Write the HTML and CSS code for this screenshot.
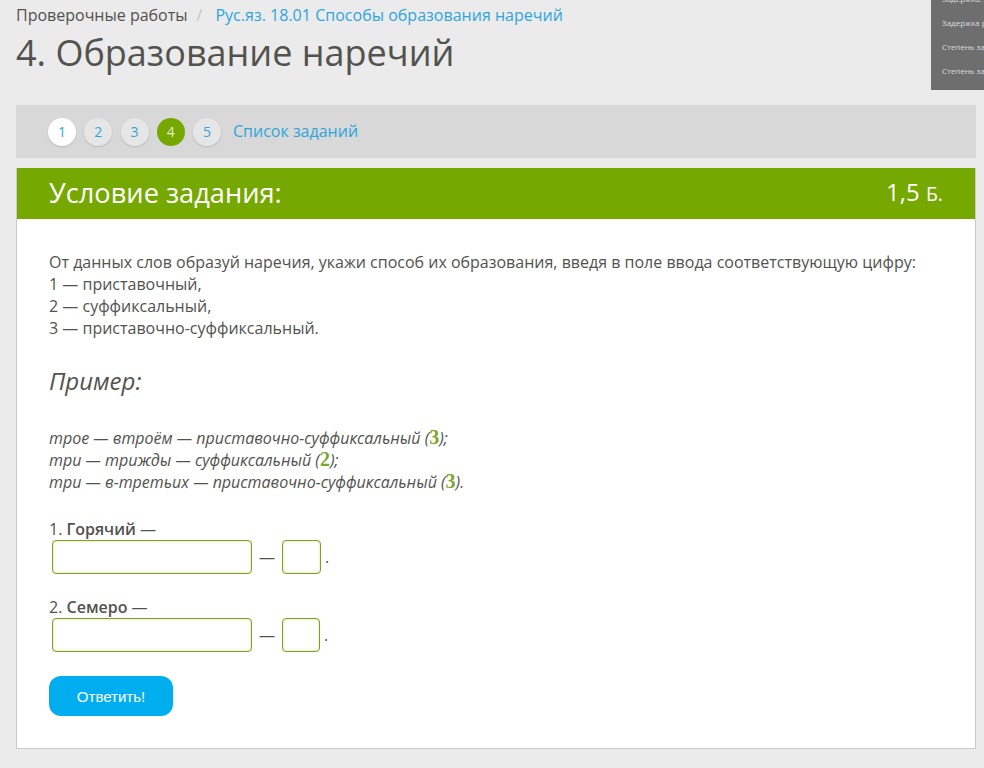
FILE: index.html
```html
<!DOCTYPE html>
<html lang="ru">
<head>
<meta charset="utf-8">
<title>4. Образование наречий</title>
<link rel="stylesheet" href="styles.css">
</head>
<body>
<div class="stats">
  <div class="stat stat-cut">Задержка: 35</div>
  <div class="stat">Задержка рен</div>
  <div class="stat">Степень загр</div>
  <div class="stat">Степень загр</div>
</div>
<nav class="crumbs"><span>Проверочные работы</span><span class="sep">/</span><a href="#">Рус.яз. 18.01 Способы образования наречий</a></nav>
<h1 class="title">4. Образование наречий</h1>
<div class="pager">
  <a class="dot dot-white" href="#">1</a>
  <a class="dot" href="#">2</a>
  <a class="dot" href="#">3</a>
  <a class="dot dot-active" href="#">4</a>
  <a class="dot" href="#">5</a>
  <a class="list-link" href="#">Список заданий</a>
</div>
<section class="card">
  <header class="card-head"><span class="card-title">Условие задания:</span><span class="score">1,5 <small>Б.</small></span></header>
  <div class="card-body">
    <p class="intro">От данных слов образуй наречия, укажи способ их образования, введя в поле ввода соответствующую цифру:<br>1 — приставочный,<br>2 — суффиксальный,<br>3 — приставочно-суффиксальный.</p>
    <h2 class="example">Пример:</h2>
    <p class="samples">трое — втроём — приставочно-суффиксальный (<b class="num">3</b>);<br>три — трижды — суффиксальный (<b class="num">2</b>);<br>три — в-третьих — приставочно-суффиксальный (<b class="num">3</b>).</p>
    <div class="task">
      <div>1. <b>Горячий</b> —</div>
      <div class="answer"><input class="field field-long" type="text"><span class="dash">—</span><input class="field field-short" type="text"><span class="stop">.</span></div>
    </div>
    <div class="task task-second">
      <div>2. <b>Семеро</b> —</div>
      <div class="answer"><input class="field field-long" type="text"><span class="dash">—</span><input class="field field-short field-narrow" type="text"><span class="stop">.</span></div>
    </div>
    <button class="submit" type="button">Ответить!</button>
  </div>
</section>
</body>
</html>
```
FILE: styles.css
```css
* { box-sizing: border-box; }
html, body { height: 100%; }
body {
  margin: 0;
  padding: 0 8px 0 16px;
  overflow: hidden;
  background: #ebebeb;
  color: #52524e;
  font: 16px/22px "Open Sans", sans-serif;
}
a { color: #2fa5dc; text-decoration: none; }
.stats {
  position: absolute;
  top: 0;
  right: 0;
  width: 53px;
  height: 90px;
  overflow: hidden;
  background: #6e6e6e;
  color: #dcdcdc;
  font-size: 8px;
  line-height: 24px;
  white-space: nowrap;
  padding: 0 0 0 11px;
}
.stat-cut { margin-top: -13px; }
.crumbs { height: 30px; padding-top: 4px; }
.sep { color: #c4c4c4; padding: 0 13px 0 9px; }
.crumbs a { letter-spacing: .02px; }
.title {
  margin: 0 0 32px;
  height: 43px;
  font-size: 36px;
  line-height: 46px;
  font-weight: 400;
}
.pager {
  display: flex;
  align-items: center;
  height: 53px;
  padding-left: 32px;
  background: #d8d8d8;
}
.dot {
  width: 28px;
  height: 28px;
  margin-right: 8.25px;
  border-radius: 50%;
  background: #e6e6e6;
  box-shadow: 0 1px 2px rgba(0,0,0,.14);
  font-size: 14px;
  line-height: 28px;
  text-align: center;
}
.dot-white { background: #fff; }
.dot-active { background: #75a800; color: #e8f0d0; box-shadow: none; }
.list-link { margin: 0 0 2px 3.75px; }
.card {
  margin-top: 10px;
  height: 581px;
  background: #fff;
  border: 1px solid #c9c9c9;
  border-top: 0;
}
.card-head {
  display: flex;
  justify-content: space-between;
  align-items: center;
  height: 51px;
  padding: 0 32px;
  background: #75a800;
  color: #fff;
  font-size: 27.2px;
}
.card-title { margin-top: -2px; }
.score { font-size: 24px; margin-top: -2px; }
.score small { font-size: 19.5px; }
.card-body { padding: 32px 32px 0; }
.intro, .samples { margin: 0; }
.example {
  margin: 26px 0 30px;
  font-size: 24px;
  line-height: 32px;
  font-weight: 400;
  font-style: italic;
}
.samples { font-style: italic; }
.num {
  color: #7aa62a;
  font-family: "Liberation Serif", serif;
  font-size: 20px;
  line-height: 0;
  font-style: normal;
  font-weight: 700;
}
.task { margin-top: 25px; }
.task-second { margin-top: 22px; }
.task b { font-weight: 600; }
.answer { display: flex; align-items: center; height: 34px; padding-left: 3px; }
.field {
  height: 34px;
  background: #fff;
  border: 1px solid #7ba21c;
  border-radius: 4px;
  box-shadow: inset 0 0 3px rgba(123,162,28,.35);
  outline: 0;
}
.field-long { width: 200px; }
.field-short { width: 39px; }
.field-narrow { width: 38px; }
.dash { margin: 0 7px; }
.stop { margin-left: 4px; }
.submit {
  display: block;
  width: 124px;
  height: 40px;
  margin-top: 24px;
  background: #00aeef;
  color: #fff;
  border: 0;
  border-radius: 12px;
  font: 15px "Liberation Sans", sans-serif;
}
```
